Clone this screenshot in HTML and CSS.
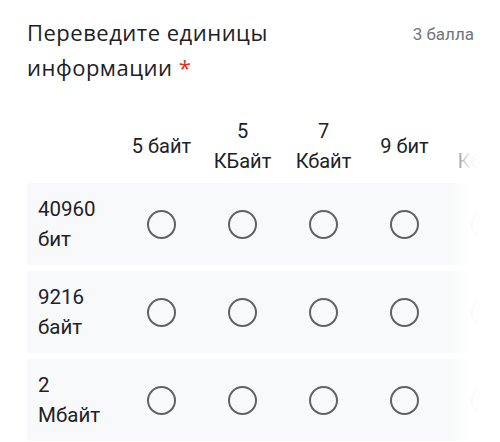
FILE: index.html
```html
<!DOCTYPE html>
<html lang="ru">
<head>
<meta charset="utf-8">
<link rel="stylesheet" href="styles.css">
</head>
<body>
<div class="question">
  <div class="head">
    <div class="title">Переведите единицы информации <span class="req">*</span></div>
    <div class="points">3 балла</div>
  </div>
  <div class="grid-wrap">
    <div class="grid">
      <div class="row header">
        <div class="label"></div>
        <div class="cell">5 байт</div>
        <div class="cell">5<br>КБайт</div>
        <div class="cell">7<br>Кбайт</div>
        <div class="cell">9 бит</div>
        <div class="cell">1<br>Кбайт</div>
      </div>
      <div class="row body">
        <div class="label">40960<br>бит</div>
        <div class="cell"><span class="radio"></span></div>
        <div class="cell"><span class="radio"></span></div>
        <div class="cell"><span class="radio"></span></div>
        <div class="cell"><span class="radio"></span></div>
        <div class="cell"><span class="radio"></span></div>
      </div>
      <div class="row body">
        <div class="label">9216<br>байт</div>
        <div class="cell"><span class="radio"></span></div>
        <div class="cell"><span class="radio"></span></div>
        <div class="cell"><span class="radio"></span></div>
        <div class="cell"><span class="radio"></span></div>
        <div class="cell"><span class="radio"></span></div>
      </div>
      <div class="row body">
        <div class="label">2<br>Мбайт</div>
        <div class="cell"><span class="radio"></span></div>
        <div class="cell"><span class="radio"></span></div>
        <div class="cell"><span class="radio"></span></div>
        <div class="cell"><span class="radio"></span></div>
        <div class="cell"><span class="radio"></span></div>
      </div>
    </div>
    <div class="fade"></div>
  </div>
</div>
</body>
</html>
```
FILE: styles.css
```css
html, body {
  margin: 0;
  padding: 0;
  background: #ffffff;
}
body {
  width: 500px;
  height: 442px;
  overflow: hidden;
  font-family: Roboto, "Noto Sans", sans-serif;
  color: #202124;
}
.question {
  padding: 15px 0 0 27px;
}
.head {
  display: flex;
  justify-content: space-between;
  align-items: flex-start;
  padding-right: 26px;
}
.title {
  width: 320px;
  font-family: "Open Sans", Roboto, sans-serif;
  font-size: 22px;
  letter-spacing: 0.5px;
  line-height: 35px;
  color: #202124;
}
.req {
  color: #d93025;
}
.points {
  font-size: 17px;
  line-height: 35px;
  color: #70757a;
  margin-top: 2px;
}
.grid-wrap {
  position: relative;
  overflow: hidden;
}
.grid {
  display: flex;
  flex-direction: column;
  gap: 6px;
  width: 520px;
}
.row {
  display: grid;
  grid-template-columns: 94px repeat(5, 81px);
  align-items: center;
}
.header {
  padding: 31px 0 1px;
  font-size: 20px;
  line-height: 30px;
  text-align: center;
  min-height: 60px;
}
.body {
  height: 82px;
  background: #f8f9fa;
}
.label {
  padding-left: 11px;
  font-size: 20.5px;
  line-height: 30px;
}
.cell {
  display: flex;
  justify-content: center;
  align-items: center;
}
.radio {
  display: block;
  width: 29px;
  height: 29px;
  box-sizing: border-box;
  border: 2.5px solid #5f6368;
  border-radius: 50%;
}
.fade {
  position: absolute;
  top: 0;
  right: 0;
  bottom: 0;
  width: 50px;
  background: linear-gradient(to right, rgba(255,255,255,0) 0%, rgba(255,255,255,0.75) 25%, rgba(255,255,255,0.96) 42%, #ffffff 60%);
}
```
